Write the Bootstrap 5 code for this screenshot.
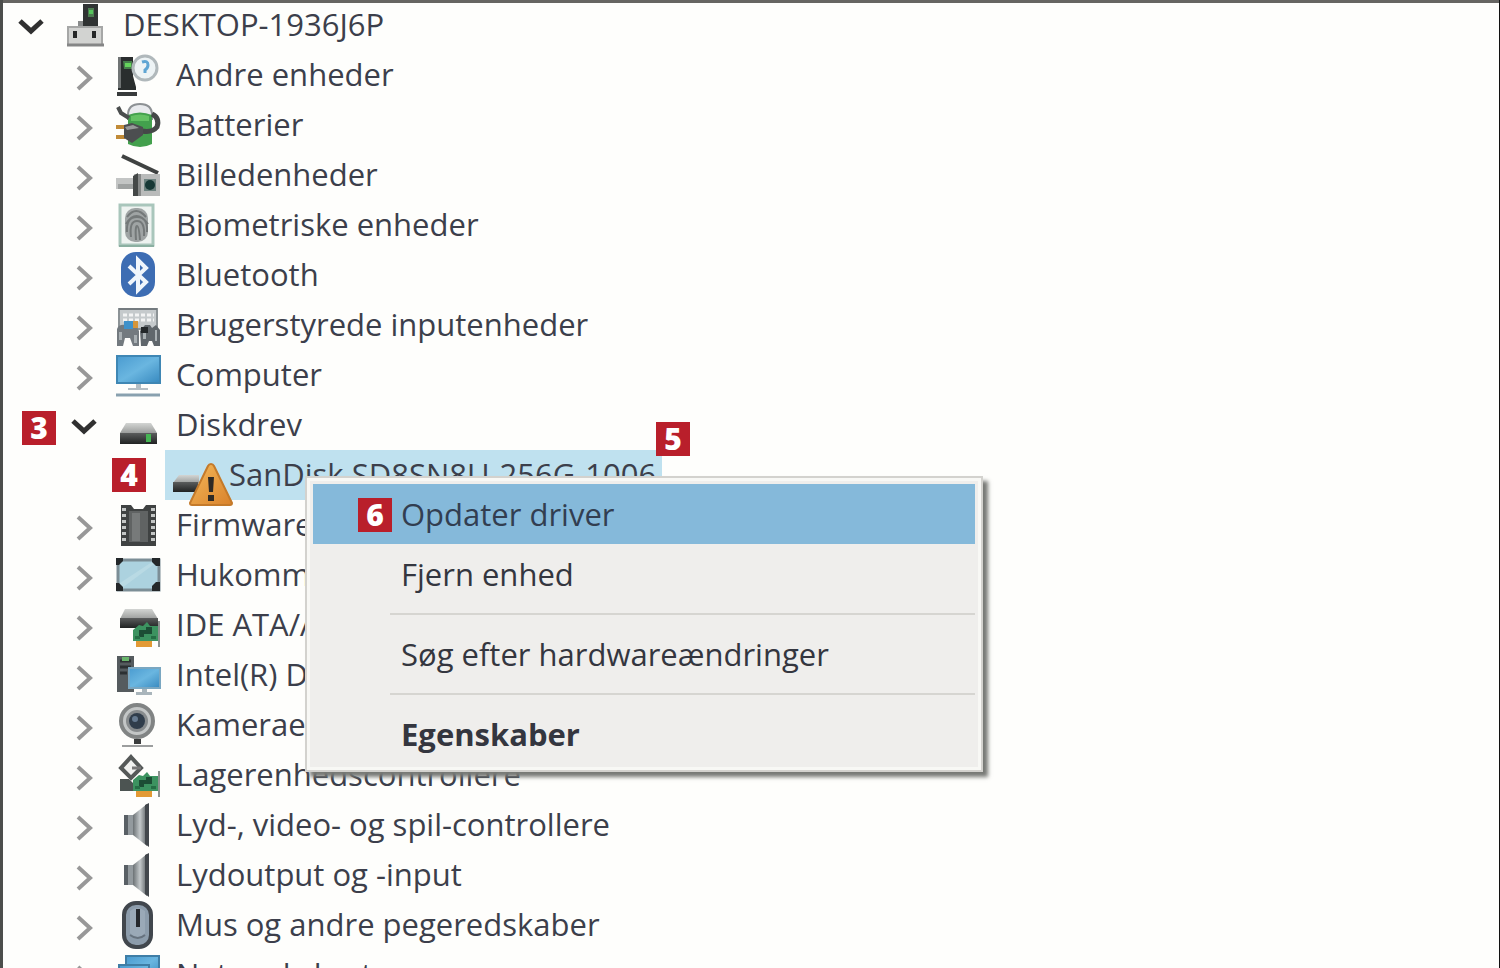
<!DOCTYPE html>
<html lang="da">
<head>
<meta charset="utf-8">
<meta name="viewport" content="width=device-width, initial-scale=1">
<title>Enhedshåndtering</title>
<link href="https://cdn.jsdelivr.net/npm/bootstrap@5.3.0/dist/css/bootstrap.min.css" rel="stylesheet">
<style>
  body { background: #fefefc; color: #3c3f4b; font-family: "Open Sans", "Noto Sans", sans-serif; font-size: 31px; line-height: 48px; }
  .window-pane { box-shadow: inset 0 3px #666562; border-left: 3px solid #4c4e4c; border-right: 1px solid #111; }
  .tree-row { height: 50px; gap: 16px; padding-left: 12px; white-space: nowrap; }
  .device-name { padding-bottom: 3px; }
  .branch { padding-left: 53px; }
  .twisty { width: 32px; height: 32px; margin-top: 6px; }
  .twisty svg { display: block; width: 32px; height: 32px; fill: none; stroke: #989898; stroke-width: 4; }
  .twisty[aria-expanded="true"] { margin-top: 2px; }
  .twisty[aria-expanded="true"] svg { stroke: #303030; stroke-width: 5; }
  .device-icon { width: 44px; height: 44px; overflow: visible; flex: none; }
  .leaf { margin-left: 109px; }
  .selected-device { background: #bfe1ef; height: 50px; gap: 15px; padding: 0 6px 0 5px; }
  .step { width: 34px; height: 34px; background: #b91f2b; color: #fff; font-size: 30px; line-height: 33px; font-weight: 800; z-index: 1010; }
  .step-3 { left: -34px; top: 11px; }
  .step-4 { left: 56px; top: 8px; }
  .step-5 { left: 491px; top: -28px; }
  .step-6 { left: 45px; top: 14px; }
  .context-menu { left: 140px; top: 26px; width: 678px; padding: 6px; background: #efeeec; border: 2px solid #d3d2ce; box-shadow: 5px 5px 4px #777975; z-index: 1000; }
  .context-menu::before { content: ""; position: absolute; inset: 0; border: 3px solid #f8f8f5; pointer-events: none; }
  .menu-entry { height: 60px; padding: 0 0 0 88px; line-height: 56px; color: #34363f; border: 0; border-radius: 0; background: none; text-align: left; }
  .menu-entry.active { background: #85b9da; color: #323e51; }
  .menu-line { margin: 9px 0 9px 77px; border-top: 2px solid #d6d5d1; opacity: 1; }
</style>
</head>
<body>
<svg width="0" height="0" class="position-absolute" aria-hidden="true">
  <defs>
    <linearGradient id="screen" x1="0" y1="0" x2="1" y2="1"><stop offset="0" stop-color="#4a9bd0"/><stop offset=".5" stop-color="#6ab6e0"/><stop offset="1" stop-color="#3789bf"/></linearGradient>
    <linearGradient id="steel" x1="0" y1="0" x2="1" y2="0"><stop offset="0" stop-color="#6c7275"/><stop offset=".5" stop-color="#c3c8ca"/><stop offset="1" stop-color="#5b6164"/></linearGradient>
    <linearGradient id="lid" x1="0" y1="0" x2="0" y2="1"><stop offset="0" stop-color="#d3d5d3"/><stop offset="1" stop-color="#9b9d9c"/></linearGradient>
    <linearGradient id="black" x1="0" y1="0" x2="0" y2="1"><stop offset="0" stop-color="#5b5d5d"/><stop offset="1" stop-color="#202222"/></linearGradient>
    <linearGradient id="amber" x1="0" y1="0" x2="1" y2="1"><stop offset="0" stop-color="#f4b95a"/><stop offset="1" stop-color="#d9822b"/></linearGradient>
    <symbol id="open" viewBox="0 0 32 32"><path d="M5 11l11 10 11-10"/></symbol>
    <symbol id="closed" viewBox="0 0 32 32"><path d="M10 5l12 11-12 11"/></symbol>
    <symbol id="speaker" viewBox="0 0 44 44">
      <path d="M8 12h9v20H8z" fill="#596065"/><path d="M12 12h5v20h-5z" fill="#939a9e"/>
      <path d="M17 12L31 1v42L17 32z" fill="url(#steel)"/><path d="M29 2l4-2v44l-4-3z" fill="#42474c"/>
    </symbol>
    <symbol id="card" viewBox="0 0 44 44">
      <path d="M17 27l6-5 4 1 4-4 3 4h8v15H17z" fill="#3c9360"/><path d="M23 27h7v-3h6v7h-8v3h-5z" fill="#1c4e35"/><path d="M19 33h5v3h-5zM35 33h5v3h-5z" fill="#256e45"/>
      <path d="M20 38h16v6H20z" fill="#e39a35"/><path d="M43 18v26" stroke="#8d9290" stroke-width="2"/>
    </symbol>
  </defs>
</svg>

<main class="window-pane vh-100 overflow-hidden">
  <ul class="list-unstyled mb-0">
    <li>
      <div class="tree-row d-flex align-items-center">
        <button class="twisty btn p-0 border-0" aria-expanded="true" aria-label="Skjul"><svg><use href="#open"/></svg></button>
        <svg class="device-icon" viewBox="0 0 44 44">
          <path d="M20 1h15v22H20z" fill="#303333"/><path d="M25 5h6v9h-6z" fill="#4c7d50"/><path d="M26 7h4v4h-4z" fill="#56c45c"/><path d="M15 18h5v5h-5z" fill="#898b8b"/>
          <path d="M5 24h34v18H5z" fill="#d2d3d1" stroke="#a6a7a6" stroke-width="2"/><path d="M4 42h37" stroke="#858686" stroke-width="3"/>
          <path d="M10 28h4v7h-4zM29 28h4v7h-4z" fill="#252727"/>
        </svg>
        <span class="device-name">DESKTOP-1936J6P</span>
      </div>
      <ul class="list-unstyled branch" id="classes">
        <li class="tree-row d-flex align-items-center position-relative">
          <button class="twisty btn p-0 border-0" aria-expanded="true" aria-label="Skjul"><svg><use href="#open"/></svg></button>
          <svg class="device-icon" viewBox="0 0 44 44">
            <path d="M10 20h25l6 10H4z" fill="url(#lid)"/><path d="M4 30h37v11H4z" fill="url(#black)"/><path d="M30 31h5v8h-5z" fill="#45b453"/>
          </svg>
          <span class="device-name">Diskdrev</span>
          <span class="step step-3 position-absolute text-center">3</span>
        </li>
        <li class="d-flex position-relative">
          <div class="leaf selected-device position-relative d-flex align-items-center text-nowrap">
            <svg class="device-icon" viewBox="0 0 44 44">
              <path d="M9 22h20v8H3z" fill="url(#lid)"/><path d="M3 29h25v10H3z" fill="url(#black)"/>
              <path d="M41 11q2 0 3 2l18 37q0 2-2 2H22q-2 0-2-2l18-37q1-2 3-2z" fill="url(#amber)" stroke="#c47a2a" stroke-width="2"/>
              <path d="M38 24h6l-1 15h-4zM38 42h6v6h-6z" fill="#2e2a25"/>
            </svg>
            <span class="device-name">SanDisk SD8SN8U-256G-1006</span>
            <span class="step step-5 position-absolute text-center">5</span>
            <div class="context-menu position-absolute" role="menu">
              <button class="menu-entry active d-block w-100 position-relative" role="menuitem"><span class="step step-6 position-absolute text-center">6</span>Opdater driver</button>
              <button class="menu-entry d-block w-100 position-relative" role="menuitem">Fjern enhed</button>
              <hr class="menu-line">
              <button class="menu-entry d-block w-100 position-relative" role="menuitem">Søg efter hardwareændringer</button>
              <hr class="menu-line">
              <button class="menu-entry d-block w-100 position-relative fw-bold" role="menuitem">Egenskaber</button>
            </div>
          </div>
          <span class="step step-4 position-absolute text-center">4</span>
        </li>
      </ul>
    </li>
  </ul>
</main>
<script src="https://cdn.jsdelivr.net/npm/bootstrap@5.3.0/dist/js/bootstrap.bundle.min.js"></script>
<script>
  // Collapsed device classes above and below the open disk branch: name and icon drawing.
  const above = [
    ['Andre enheder', '<path d="M2 4h15v19l3 11v3H2z" fill="#2a2e2e"/><path d="M2 4h3v31H2z" fill="#707474"/><path d="M7 8h9v8H8z" fill="#467f4b"/><path d="M9 10h6v4H9z" fill="#65d45c"/><path d="M1 39h20v4H1z" fill="#383b3b"/><circle cx="29" cy="15" r="12" fill="#edf3f5" stroke="#b0b8bb" stroke-width="3"/><path d="M26 9q6-2 6 3 0 3-3 5v3" fill="none" stroke="#5fa5d3" stroke-width="3"/>'],
    ['Batterier', '<path d="M12 12q0-11 12-11t12 11v4H12z" fill="#e8eaed" stroke="#8d9194" stroke-width="2"/><path d="M12 12q12-5 24 0v29q-12 6-24 0z" fill="#43a04d"/><path d="M15 13q9-3 18 0v5H15z" fill="#64c164"/><path d="M0 24h9M0 34h9" stroke="#c18b38" stroke-width="4"/><path d="M2 4l3 6 8 5" fill="none" stroke="#4b4e4e" stroke-width="4"/><path d="M26 28q10 2 15-4 3-9-5-13" fill="none" stroke="#454848" stroke-width="5"/><path d="M8 22l8-2 11 4v8l-11 8-8-5z" fill="#4c4e50"/><path d="M9 24l8-2 6 3-12 2z" fill="#979999"/>'],
    ['Billedenheder', '<path d="M6 3l36 17" stroke="#3f4241" stroke-width="4"/><path d="M0 25h17v11H0z" fill="#c3c5c4"/><path d="M2 31h15v5H2z" fill="#9fa2a1"/><path d="M18 21h26v22H18z" fill="#b9bbba"/><path d="M17 23l5-3v23h-5z" fill="#444847"/><path d="M22 21h3v22h-3z" fill="#858887"/><path d="M28 26h12v12H28z" fill="#6e8380"/><circle cx="34" cy="32" r="5" fill="#173936"/>'],
    ['Biometriske enheder', '<path d="M4 2h33v40H4z" fill="#eef3f0" stroke="#a9c6bb" stroke-width="3"/><path d="M3 43h35" stroke="#8bb0a1" stroke-width="2"/><rect x="9" y="5" width="23" height="34" rx="10" fill="#9fa4a4"/><g fill="none" stroke="#747979" stroke-width="2"><path d="M11 14q9-12 19 0M10 21q10-16 22 0M11 29q-1-15 10-15t10 15M15 34q-2-16 6-16t7 15M20 37q-1-14 1-14t3 14"/></g>'],
    ['Bluetooth', '<rect x="5" y="-1" width="34" height="45" rx="15" fill="#3d6db3"/><path d="M13 13l17 16-8 8V7l8 8-17 16" fill="none" stroke="#f0f6fc" stroke-width="4"/>'],
    ['Brugerstyrede inputenheder', '<path d="M3 6h38v20H3z" fill="#c5cacc" stroke="#8c9396" stroke-width="2"/><path d="M3 6h38" stroke="#747b7f" stroke-width="2"/><path d="M7 12h31M7 17h31" stroke="#f3f4f4" stroke-width="3" stroke-dasharray="4 2"/><path d="M1 26q2-5 8-4h11l3 6v15h-6l-3-8H9l-2 8H1z" fill="#737a7f"/><path d="M24 28l5-6h5l2 3 4-3 4 5v16h-6l-2-5h-3l-2 5h-6z" fill="#60676c"/><path d="M27 27h3v9h-3zM39 27h2v11h-2z" fill="#a9b0b3"/><path d="M25 24h7v6h-7z" fill="#23282a"/><path d="M8 18h9v8H8z" fill="#3f91ca"/><path d="M17 18h5v7h-5z" fill="#d69539"/><path d="M3 29h3v8H3zM18 32h3v8h-3z" fill="#a9b0b3"/>'],
    ['Computer', '<path d="M1 3h43v27H1z" fill="url(#screen)" stroke="#3f87b4" stroke-width="2"/><path d="M20 31h5v4h7v2H12v-2h8z" fill="#b5bfc5"/><path d="M0 42h44" stroke="#89a1af" stroke-width="3"/>']
  ];
  const below = [
    ['Firmware', '<path d="M5 2h10l3 4h9l3-4h10v41H5z" fill="#3f4242"/><path d="M13 8h19v31H13z" fill="#606363"/><path d="M16 10h8v28h-8z" fill="#777a7a"/><path d="M8 5v36M37 5v36" stroke="#c4c7c6" stroke-width="4" stroke-dasharray="3 3"/>'],
    ['Hukommelsesenheder', '<rect x="2" y="7" width="41" height="30" fill="#acd2df" stroke="#7c8e96" stroke-width="3"/><path d="M4 30L36 9h5L6 35H4z" fill="#b9dae4"/><path d="M0 5h7v3L3 12H0zM44 5h-8v4l4 4h4zM0 38h7v-4l-4-4H0zM44 38h-8v-5l4-4h4z" fill="#24282a"/>'],
    ['IDE ATA/ATAPI-controllere', '<path d="M9 6h27l6 10H4z" fill="url(#lid)"/><path d="M4 15h38v10H4z" fill="url(#black)"/><use href="#card" width="44" height="44"/>'],
    ['Intel(R) Dynamic Platform', '<path d="M1 3h17v36H1z" fill="#555b5e"/><path d="M4 8h11M4 14h11M4 20h7" stroke="#2c3032" stroke-width="3"/><path d="M6 4h7v4H6z" fill="#69b56b"/><path d="M13 15h31v20H13z" fill="url(#screen)" stroke="#7aa7c1" stroke-width="2"/><path d="M26 36h5v3h5v3H20v-3h6z" fill="#a9b5bb"/>'],
    ['Kameraenheder', '<circle cx="21" cy="18" r="16" fill="#c3c6c6" stroke="#818484" stroke-width="4"/><circle cx="21" cy="18" r="11" fill="#878b8d"/><circle cx="21" cy="18" r="8" fill="#303d4b"/><circle cx="19" cy="16" r="3" fill="#667a90"/><path d="M18 36h7v5h-7z" fill="#3b3d3d"/><path d="M6 43h31" stroke="#9c9e9e" stroke-width="2"/>'],
    ['Lagerenhedscontrollere', '<path d="M4 26h9l5 5v7H4z" fill="#4c5452"/><path d="M15 4l10 11-10 10L5 15z" fill="#f0f1ef" stroke="#555958" stroke-width="4"/><path d="M16 15h9" stroke="#777" stroke-width="3"/><use href="#card" width="44" height="44"/>'],
    ['Lyd-, video- og spil-controllere', '<use href="#speaker" width="44" height="44"/>'],
    ['Lydoutput og -input', '<use href="#speaker" width="44" height="44"/>'],
    ['Mus og andre pegeredskaber', '<rect x="8" y="0" width="27" height="44" rx="12" fill="#8c9cab" stroke="#41474d" stroke-width="4"/><path d="M14 8q7-6 15 0v22q-7 8-15 0z" fill="#9aa9b7"/><path d="M22 6v18" stroke="#25282c" stroke-width="4"/><path d="M14 32q8 6 15 0" fill="none" stroke="#66727e" stroke-width="2"/>'],
    ['Netværkskort', '<path d="M10 3h33v24H10z" fill="url(#screen)" stroke="#3f7ea6" stroke-width="2"/><path d="M3 12h30v22H3z" fill="url(#screen)" stroke="#3f7ea6" stroke-width="2"/>']
  ];
  const rows = list => list.map(([name, art]) => `
    <li class="tree-row d-flex align-items-center">
      <button class="twisty btn p-0 border-0" aria-label="Vis"><svg><use href="#closed"/></svg></button>
      <svg class="device-icon" viewBox="0 0 44 44">${art}</svg>
      <span class="device-name">${name}</span>
    </li>`).join('');
  const classes = document.getElementById('classes');
  classes.insertAdjacentHTML('afterbegin', rows(above));
  classes.insertAdjacentHTML('beforeend', rows(below));
</script>
</body>
</html>
